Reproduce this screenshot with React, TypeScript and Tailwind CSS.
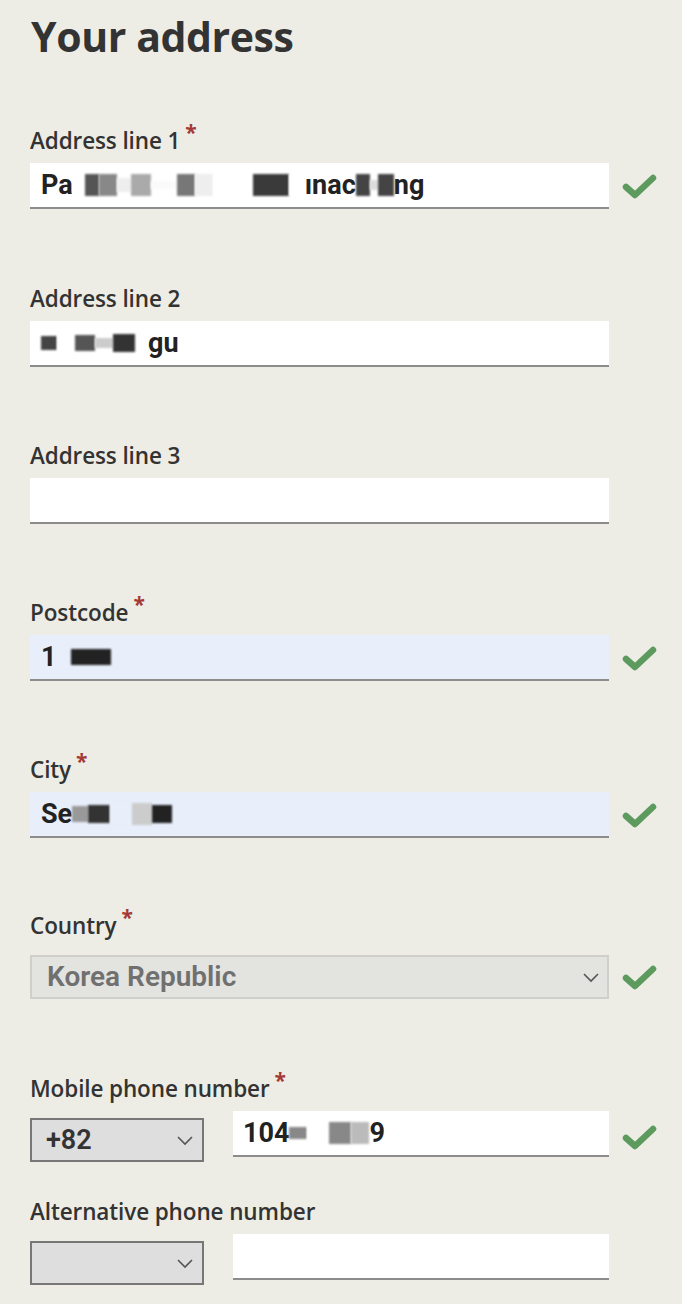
import type { ReactNode } from 'react'

const labelCls =
  "h-[28px] leading-[28px] text-[22.5px] font-semibold tracking-[-0.005em] text-[#333333] font-['Open_Sans',sans-serif]"

function Check() {
  return (
    <svg width="38" height="32" viewBox="0 0 38 32" className="shrink-0 ml-[12px]">
      <polyline
        points="5,17 14,25 32,8"
        fill="none"
        stroke="#5c9a5e"
        strokeWidth="6.5"
        strokeLinecap="round"
        strokeLinejoin="round"
      />
    </svg>
  )
}

function Chevron() {
  return (
    <svg width="18" height="12" viewBox="0 0 18 12" className="shrink-0">
      <polyline points="2,3 9,10 16,3" fill="none" stroke="#555" strokeWidth="1.6" />
    </svg>
  )
}

function Label({ text, required }: { text: string; required?: boolean }) {
  return (
    <div className={labelCls}>
      {text}
      {required && <span className="relative -top-[9px] ml-[5px] text-[21px] font-bold text-[#a33a35]">*</span>}
    </div>
  )
}

// blurred-out bits of the real text
function Blob({ w, c, h = 22 }: { w: number; c: string; h?: number }) {
  return (
    <span
      className="inline-block align-middle blur-[1px]"
      style={{ width: w, height: h, backgroundColor: c }}
    />
  )
}

function TextInput({ children, blue }: { children?: ReactNode; blue?: boolean }) {
  return (
    <div
      className={`w-[579px] h-[46px] flex items-center px-[11px] border-b-2 border-[#8c8c8c] text-[27px] font-bold text-[#222] font-['Roboto',sans-serif] whitespace-nowrap overflow-hidden ${
        blue ? 'bg-[#e8eefa]' : 'bg-white'
      }`}
    >
      {children}
    </div>
  )
}

function Field({ label, required, children, check, mt }: {
  label: string
  required?: boolean
  children: ReactNode
  check?: boolean
  mt: string
}) {
  return (
    <div className={mt}>
      <Label text={label} required={required} />
      <div className="mt-[8px] flex items-center">
        {children}
        {check && <Check />}
      </div>
    </div>
  )
}

function SmallSelect({ value }: { value?: string }) {
  return (
    <div className="w-[174px] h-[44px] mt-[7px] flex items-center justify-between pl-[14px] pr-[8px] bg-[#dedede] border-2 border-[#777] text-[27px] font-semibold text-[#333] font-['Roboto',sans-serif]">
      <span>{value}</span>
      <Chevron />
    </div>
  )
}

export default function App() {
  return (
    <div className="min-h-screen bg-[#eeede5] pl-[30px] pt-[12px] pb-[20px]">
      <h1 className="h-[48px] leading-[48px] text-[41px] font-bold tracking-[-0.01em] text-[#333333] pl-[1px] font-['Open_Sans',sans-serif]">
        Your address
      </h1>

      <Field label="Address line 1" required check mt="mt-[67px]">
        <TextInput>
          <span>Pa</span>
          <span className="inline-flex items-center ml-[12px]">
            <Blob w={14} c="#555" />
            <Blob w={18} c="#888" />
            <Blob w={14} c="#eee" h={14} />
            <Blob w={20} c="#aaa" />
            <Blob w={26} c="#fafafa" h={8} />
            <Blob w={18} c="#777" />
            <Blob w={18} c="#eee" />
            <Blob w={40} c="#fff" />
            <Blob w={36} c="#3a3a3a" />
            <Blob w={16} c="#fff" />
          </span>
          <span>ınac</span>
          <Blob w={14} c="#444" />
          <Blob w={8} c="#ddd" h={10} />
          <Blob w={16} c="#444" />
          <span>ng</span>
        </TextInput>
      </Field>

      <Field label="Address line 2" mt="mt-[76px]">
        <TextInput>
          <Blob w={16} c="#444" h={14} />
          <Blob w={18} c="#fff" />
          <Blob w={20} c="#555" h={16} />
          <Blob w={18} c="#ccc" h={10} />
          <Blob w={22} c="#333" h={18} />
          <span className="ml-[13px]">gu</span>
        </TextInput>
      </Field>

      <Field label="Address line 3" mt="mt-[75px]">
        <TextInput />
      </Field>

      <Field label="Postcode" required check mt="mt-[75px]">
        <TextInput blue>
          <span>1</span>
          <Blob w={14} c="#e8eefa" />
          <Blob w={40} c="#222" h={16} />
        </TextInput>
      </Field>

      <Field label="City" required check mt="mt-[75px]">
        <TextInput blue>
          <span>Se</span>
          <Blob w={16} c="#999" h={16} />
          <Blob w={22} c="#333" h={18} />
          <Blob w={22} c="#e8eefa" />
          <Blob w={20} c="#ccc" />
          <Blob w={20} c="#222" h={18} />
        </TextInput>
      </Field>

      <div className="mt-[74px]">
        <Label text="Country" required />
        <div className="mt-[15px] flex items-center">
          <div className="w-[579px] h-[44px] flex items-center justify-between pl-[15px] pr-[7px] bg-[#e3e3df] border-2 border-[#cfcfcb] text-[28px] font-semibold text-[#707070] font-['Roboto',sans-serif]">
            <span>Korea Republic</span>
            <Chevron />
          </div>
          <Check />
        </div>
      </div>

      <div className="mt-[76px]">
        <Label text="Mobile phone number" required />
        <div className="mt-[8px] flex items-start">
          <SmallSelect value="+82" />
          <div className="ml-[29px]">
            <div className="w-[376px] h-[46px] flex items-center px-[10px] bg-white border-b-2 border-[#8c8c8c] text-[27px] font-bold text-[#222] font-['Roboto',sans-serif]">
              <span>104</span>
              <Blob w={18} c="#888" h={12} />
              <Blob w={22} c="#fff" />
              <Blob w={22} c="#888" />
              <Blob w={18} c="#bbb" />
              <span>9</span>
            </div>
          </div>
          <div className="self-center"><Check /></div>
        </div>
      </div>

      <div className="mt-[36px]">
        <Label text="Alternative phone number" />
        <div className="mt-[8px] flex items-start">
          <SmallSelect />
          <div className="ml-[29px] w-[376px] h-[46px] bg-white border-b-2 border-[#8c8c8c]" />
        </div>
      </div>
    </div>
  )
}
